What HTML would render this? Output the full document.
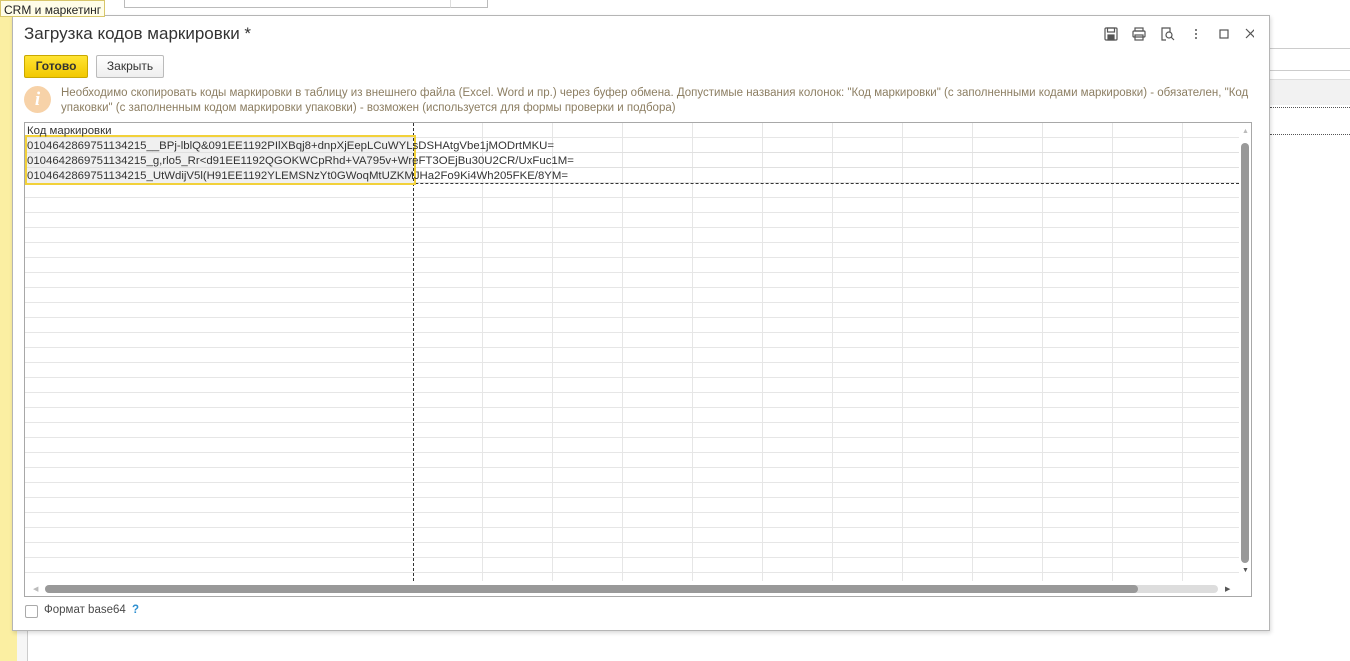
<!DOCTYPE html>
<html><head><meta charset="utf-8">
<style>
*{box-sizing:border-box;margin:0;padding:0}
body{width:1350px;height:661px;overflow:hidden;background:#fff;font-family:"Liberation Sans",Arial,sans-serif;position:relative}
.abs{position:absolute}
</style></head><body>
<!-- background app -->
<div class="abs" style="left:0;top:0;width:17px;height:661px;background:#fbefa2"></div>
<div class="abs" style="left:17px;top:0;width:11px;height:661px;background:#f6f6f6;border-right:1px solid #ccc"></div>
<div class="abs" style="left:124px;top:-2px;width:346px;height:10px;border:1px solid #bbb;background:#fff"></div>
<div class="abs" style="left:450px;top:-2px;width:38px;height:10px;border:1px solid #bbb;border-left:1px solid #ddd;background:#fff"></div>
<div class="abs" style="left:1270px;top:48px;width:80px;height:1px;background:#ccc"></div>
<div class="abs" style="left:1270px;top:70px;width:80px;height:1px;background:#ccc"></div>
<div class="abs" style="left:1270px;top:79px;width:80px;height:26px;background:#f2f2f2;border-top:1px solid #ddd"></div>
<div class="abs" style="left:1270px;top:107px;width:80px;border-top:1px dotted #555"></div>
<div class="abs" style="left:1270px;top:134px;width:80px;border-top:1px dotted #555"></div>
<div class="abs" style="left:0;top:0;height:17px;padding:2px 3px;background:#fffde8;border:1px solid #d8c66a;font-size:12px;color:#222;white-space:nowrap;z-index:5">CRM и маркетинг</div>

<!-- window -->
<div class="abs" style="left:12px;top:15px;width:1258px;height:616px;background:#fff;border:1px solid #b5b5b5;box-shadow:1px 2px 4px rgba(0,0,0,.15)"></div>
<div class="abs" style="left:24px;top:24px;font-size:17px;color:#333">Загрузка кодов маркировки *</div>

<!-- header icons -->
<svg class="abs" style="left:1104px;top:27px" width="150" height="16" viewBox="0 0 150 16" fill="none" stroke="#555" stroke-width="1.2">
 <rect x="1" y="1" width="12" height="12" rx="1"/><rect x="3.5" y="1" width="7" height="4"/><rect x="4" y="8" width="6" height="5" fill="#555"/>
 <rect x="31" y="1" width="8" height="3"/><rect x="29" y="4" width="12" height="6" rx="1"/><rect x="31" y="8" width="8" height="5"/>
 <path d="M62 1h-4v12h4M62 1h4v4"/><circle cx="65" cy="8" r="3"/><path d="M67 10l3 3"/>
 <g fill="#555" stroke="none"><circle cx="92" cy="3" r="1"/><circle cx="92" cy="7" r="1"/><circle cx="92" cy="11" r="1"/></g>
 <rect x="116" y="3" width="8" height="8"/>
 <path d="M142 2l9 9M151 2l-9 9"/>
</svg>

<!-- buttons -->
<div class="abs" style="left:24px;top:55px;width:64px;height:23px;background:linear-gradient(#ffe433,#f2c800);border:1px solid #c9a800;border-radius:2px;font-size:12px;font-weight:bold;color:#333;text-align:center;line-height:21px">Готово</div>
<div class="abs" style="left:96px;top:55px;width:68px;height:23px;background:linear-gradient(#fff,#eee);border:1px solid #bbb;border-radius:2px;font-size:12px;color:#333;text-align:center;line-height:21px">Закрыть</div>

<!-- info -->
<div class="abs" style="left:24px;top:86px;width:27px;height:27px;border-radius:50%;background:#f7d2a8;color:#fff;font-weight:bold;font-style:italic;font-size:19px;text-align:center;line-height:27px;font-family:'Liberation Serif',serif">i</div>
<div class="abs" style="left:61px;top:86px;width:1200px;font-size:11.5px;line-height:14.5px;color:#8c7e62">Необходимо скопировать коды маркировки в таблицу из внешнего файла (Excel. Word и пр.) через буфер обмена. Допустимые названия колонок: "Код маркировки" (с заполненными кодами маркировки) - обязателен, "Код упаковки" (с заполненным кодом маркировки упаковки) - возможен (используется для формы проверки и подбора)</div>

<!-- grid -->
<div class="abs" style="left:24px;top:122px;width:1228px;height:475px;border:1px solid #a8a8a8;background:#fff;overflow:hidden">
 <div class="abs" style="left:0;top:0;width:1214px;height:458px;
  background-image:repeating-linear-gradient(to bottom,transparent 0,transparent 14px,#e6e6e6 14px,#e6e6e6 15px)"></div>
 <div class="abs" style="left:388px;top:0;width:826px;height:458px;
  background-image:repeating-linear-gradient(to right,transparent 0,transparent 69px,#e6e6e6 69px,#e6e6e6 70px)"></div>
 <div class="abs" style="left:0;top:15px;width:388px;height:45px;background:#f0f0f0"></div>
 <div class="abs" style="left:0;top:29px;width:1214px;height:1px;background:#e0e0e0"></div>
 <div class="abs" style="left:0;top:44px;width:1214px;height:1px;background:#e0e0e0"></div>
 <div class="abs" style="left:388px;top:0;height:458px;border-left:1px dashed #333"></div>
 <div class="abs" style="left:0;top:60px;width:1214px;border-top:1px dashed #333"></div>
 <div class="abs" style="left:0;top:12px;width:391px;height:50px;border:2px solid #f2d13a"></div>
 <div class="abs" style="left:2px;top:1px;font-size:11.4px;line-height:15px;color:#333;white-space:nowrap">Код маркировки<br>
 0104642869751134215__BPj-lblQ&amp;091EE1192PIlXBqj8+dnpXjEepLCuWYLsDSHAtgVbe1jMODrtMKU=<br>
 0104642869751134215_g,rlo5_Rr&lt;d91EE1192QGOKWCpRhd+VA795v+WreFT3OEjBu30U2CR/UxFuc1M=<br>
 0104642869751134215_UtWdijV5l(H91EE1192YLEMSNzYt0GWoqMtUZKMJHa2Fo9Ki4Wh205FKE/8YM=</div>
 <!-- vertical scrollbar -->
 <div class="abs" style="left:1215px;top:0;width:12px;height:458px;background:#fff"></div>
 <div class="abs" style="left:1217px;top:5px;font-size:7px;color:#bbb">▲</div>
 <div class="abs" style="left:1216px;top:20px;width:8px;height:420px;background:#999;border-radius:4px"></div>
 <div class="abs" style="left:1217px;top:444px;font-size:7px;color:#555">▼</div>
 <!-- horizontal scrollbar -->
 <div class="abs" style="left:0;top:458px;width:1228px;height:16px;background:#fff"></div>
 <div class="abs" style="left:8px;top:462px;font-size:7px;color:#bbb">◀</div>
 <div class="abs" style="left:20px;top:462px;width:1173px;height:8px;background:#ddd;border-radius:4px"></div>
 <div class="abs" style="left:20px;top:462px;width:1093px;height:8px;background:#999;border-radius:4px"></div>
 <div class="abs" style="left:1200px;top:462px;font-size:7px;color:#555">▶</div>
</div>

<!-- checkbox -->
<div class="abs" style="left:25px;top:605px;width:13px;height:13px;border:1px solid #aaa;border-radius:2px;background:#fff"></div>
<div class="abs" style="left:44px;top:604px;font-size:11.5px;color:#4a4a4a">Формат base64 <span style="color:#2d8fd0;font-weight:bold;margin-left:3px">?</span></div>
</body></html>
